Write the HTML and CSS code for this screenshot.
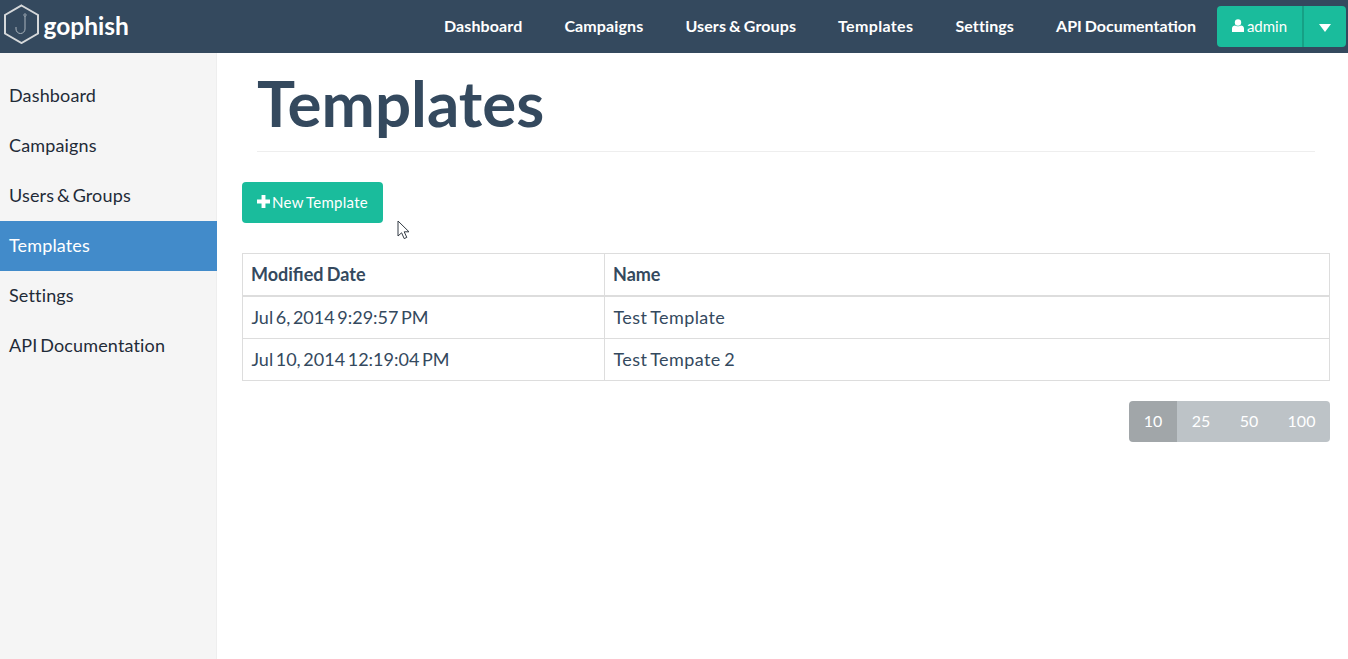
FILE: index.html
```html
<!DOCTYPE html>
<html>
<head>
	<meta charset="utf-8" />
	<title>Gophish - Templates</title>
	<link rel="stylesheet" href="styles.css">
</head>
<body>
	<div class="navbar">
		<div class="brand">
			<svg class="brand-logo" width="36" height="40" viewBox="0 0 36 40">
				<polygon points="18.5,1.5 35,11 35,29.5 18.5,39 2,29.5 2,11" fill="none" stroke="#d5d8da" stroke-width="2" />
				<path d="M22 12 V25 a4.5 4.5 0 0 1 -9 0 V23" fill="none" stroke="#aab4bc" stroke-width="1" />
				<circle cx="22" cy="11" r="1.2" fill="none" stroke="#aab4bc" stroke-width="0.8" />
			</svg>
			<span class="brand-name">gophish</span>
		</div>
		<ul class="nav-links">
			<li>Dashboard</li>
			<li>Campaigns</li>
			<li>Users &amp; Groups</li>
			<li class="nav-templates">Templates</li>
			<li>Settings</li>
			<li class="nav-api">API Documentation</li>
		</ul>
		<div class="user-btn">
			<div class="user-name">
				<svg width="12" height="13" viewBox="0 0 12 13"><circle cx="6" cy="3.5" r="3.2" fill="#fff" /><path d="M0 13 V9.5 C0 7.5 1.5 6.5 3 6.5 C4 7.5 8 7.5 9 6.5 C10.5 6.5 12 7.5 12 9.5 V13 Z" fill="#fff" /></svg>
				<span>admin</span>
			</div>
			<div class="user-caret"><span class="caret"></span></div>
		</div>
	</div>

	<div class="page">
		<ul class="sidebar">
			<li>Dashboard</li>
			<li>Campaigns</li>
			<li>Users &amp; Groups</li>
			<li class="active">Templates</li>
			<li>Settings</li>
			<li>API Documentation</li>
		</ul>

		<div class="main">
			<h1 class="page-title">Templates</h1>
			<div class="new-btn">
				<svg width="13" height="13" viewBox="0 0 12 12"><path d="M4.2 0 H7.8 V4.2 H12 V7.8 H7.8 V12 H4.2 V7.8 H0 V4.2 H4.2 Z" fill="#fff" /></svg>
				<span>New Template</span>
			</div>
			<svg class="cursor" width="14" height="20" viewBox="0 0 14 20"><path d="M1 1 V16 L4.6 12.8 L7.2 18.6 L9.8 17.4 L7.2 11.8 H12 Z" fill="#fff" stroke="#333b44" stroke-width="1" /></svg>

			<table class="tpl-table">
				<thead>
					<tr><th class="col-date">Modified Date</th><th>Name</th></tr>
				</thead>
				<tbody>
					<tr class="first"><td class="date">Jul 6, 2014 9:29:57 PM</td><td class="name">Test Template</td></tr>
					<tr><td class="date">Jul 10, 2014 12:19:04 PM</td><td class="name">Test Tempate 2</td></tr>
				</tbody>
			</table>

			<div class="pager">
				<span class="on">10</span><span>25</span><span>50</span><span class="wide">100</span>
			</div>
		</div>
	</div>
</body>
</html>
```

FILE: styles.css
```css
* {
	margin: 0;
	padding: 0;
	box-sizing: border-box;
}

html, body {
	width: 100%;
	height: 100%;
	overflow: hidden;
}

body {
	font-family: "Lato", "Liberation Sans", sans-serif;
	font-size: 18px;
	color: #34495e;
	background-color: #fff;
}

.navbar {
	display: flex;
	align-items: center;
	height: 53px;
	background-color: #34495e;
	padding: 0 2px 0 3px;
}

.brand {
	display: flex;
	align-items: center;
	gap: 4.5px;
}

.brand-logo {
	display: block;
	margin-bottom: 6px;
}

.brand-name {
	color: #fff;
	font-size: 24.5px;
	font-weight: 700;
	padding-bottom: 2px;
}

.nav-links {
	display: flex;
	list-style: none;
	margin-left: auto;
	gap: 42px;
	margin-right: 21px;
}

.nav-links li {
	color: #fff;
	font-size: 16px;
	font-weight: 700;
	line-height: 51px;
	height: 53px;
	word-spacing: -1px;
	letter-spacing: 0.12px;
}

.nav-links .nav-templates {
	letter-spacing: 0.35px;
}

.nav-links .nav-api {
	letter-spacing: 0;
}

.user-btn {
	display: flex;
	width: 129px;
	height: 41px;
	background-color: #1abc9c;
	border-radius: 4px;
	color: #fff;
	font-size: 15px;
}

.user-name {
	display: flex;
	align-items: center;
	justify-content: center;
	gap: 3px;
	width: 87px;
	padding-bottom: 2px;
	border-right: 2px solid #16a085;
}

.user-caret {
	flex: 1;
	display: flex;
	align-items: center;
	justify-content: center;
	padding-top: 2px;
}

.caret {
	width: 0;
	height: 0;
	border-left: 6.5px solid transparent;
	border-right: 6.5px solid transparent;
	border-top: 8px solid #fff;
}

.page {
	display: flex;
	height: 606px;
}

.sidebar {
	width: 217px;
	flex-shrink: 0;
	list-style: none;
	background-color: #f5f5f5;
	border-right: 1px solid #eee;
	padding-top: 18px;
}

.sidebar li {
	height: 50px;
	line-height: 48px;
	padding-left: 9px;
	color: #1f2b38;
	letter-spacing: 0.15px;
	word-spacing: -2px;
}

.sidebar li.active {
	background-color: #428bca;
	color: #fff;
	margin-right: -1px;
}

.main {
	flex: 1;
	padding: 0 18px 0 25px;
	position: relative;
}

.page-title {
	margin: 0 15px 0 15px;
	height: 99px;
	padding-top: 14px;
	font-size: 63.7px;
	line-height: 72px;
	font-weight: 700;
	border-bottom: 1px solid #eee;
}

.new-btn {
	display: flex;
	align-items: center;
	justify-content: center;
	gap: 2px;
	width: 141px;
	height: 41px;
	margin-top: 30px;
	padding-bottom: 2px;
	background-color: #1abc9c;
	border-radius: 4px;
	color: #fff;
	font-size: 15px;
	word-spacing: -1px;
	letter-spacing: 0.25px;
}

.cursor {
	position: absolute;
	left: 180px;
	top: 167px;
}

.tpl-table {
	width: 100%;
	margin-top: 30px;
	border-collapse: collapse;
	table-layout: fixed;
}

.tpl-table th, .tpl-table td {
	border: 1px solid #ddd;
	padding: 0 8.5px 2px;
	text-align: left;
	height: 42px;
	font-size: 18px;
}

.tpl-table th {
	border-bottom-width: 2px;
	height: 42px;
	padding: 0 8px 1px;
	word-spacing: -1px;
}

.tpl-table .first td {
	height: 43px;
	padding-bottom: 1px;
}

.tpl-table .date {
	word-spacing: -2px;
}

.tpl-table .name {
	letter-spacing: 0.4px;
	word-spacing: -1.5px;
}

.col-date {
	width: 362px;
}

.pager {
	display: flex;
	justify-content: flex-end;
	margin-top: 20px;
}

.pager span {
	width: 48px;
	height: 41px;
	line-height: 39px;
	text-align: center;
	background-color: #bdc3c7;
	color: #fff;
	font-size: 16px;
}

.pager .on {
	background-color: #a1a6a9;
	border-radius: 4px 0 0 4px;
}

.pager .wide {
	width: 57px;
	border-radius: 0 4px 4px 0;
}
```
